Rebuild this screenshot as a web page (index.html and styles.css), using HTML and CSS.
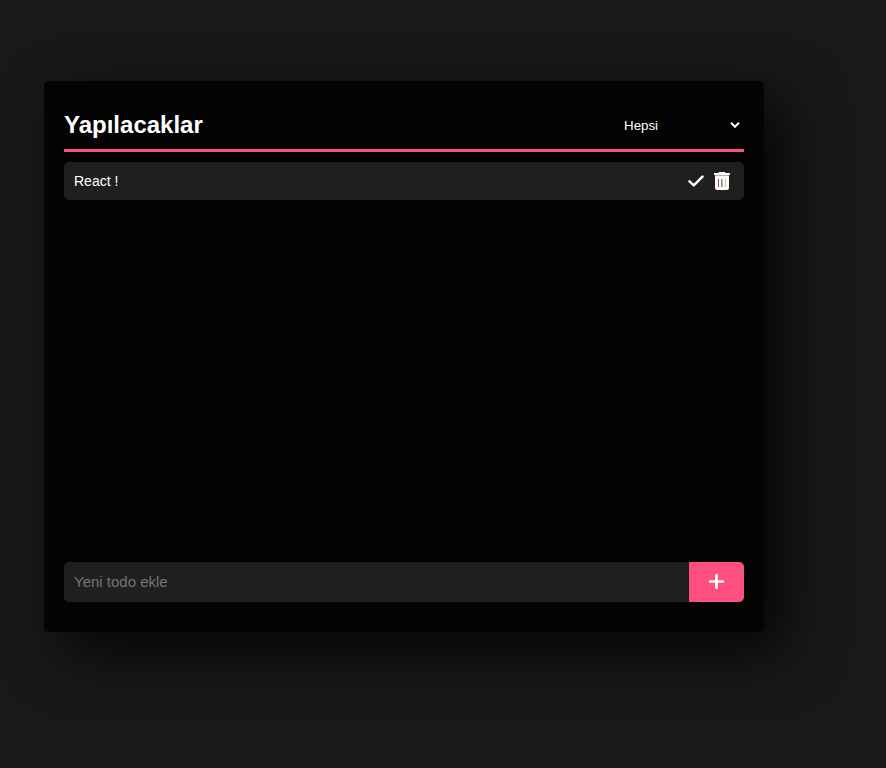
FILE: index.html
```html
<!DOCTYPE html>
<html lang="tr">
<head>
<meta charset="utf-8">
<title>Yapılacaklar</title>
<link rel="stylesheet" href="styles.css">
</head>
<body>
<main class="card">
  <header class="header">
    <h1 class="title">Yapılacaklar</h1>
    <div class="filter"><span>Hepsi</span>
      <svg class="chevron" viewBox="0 0 10 6"><path d="M1 0.8 5 4.8 9 0.8"/></svg>
    </div>
  </header>
  <ul class="list">
    <li class="item">
      <span class="text">React !</span>
      <svg class="check" viewBox="0 0 16 18"><path d="M1.500 9.300 5.800 13.300 14.500 4.700"/></svg>
      <svg class="trash" viewBox="0 0 16 18">
        <path class="fill" d="M0 1h4.500l.6-1h5.800l.6 1H16v2H0zM1 4h14v11.500Q15 18 12.500 18h-9Q1 18 1 15.500z"/>
        <path class="shade" d="M1 3h14v1H1z"/>
        <path class="bar-a" d="M4 7h1v8H4z"/>
        <path class="bar-b" d="M7 7h1v8H7z"/>
        <path class="bar-c" d="M8 7h1v8H8z"/>
        <path class="bar-d" d="M11 7h1v8h-1z"/>
      </svg>
    </li>
  </ul>
  <form class="form">
    <input class="input" placeholder="Yeni todo ekle">
    <button class="add" type="button" aria-label="Ekle"><svg viewBox="0 0 15 15"><path d="M6.200 .8a1.300 .8 0 0 1 2.600 0v5.400h5.400a.8 1.300 0 0 1 0 2.600H8.800v5.400a1.300 .8 0 0 1-2.600 0V8.800H.8a.8 1.300 0 0 1 0-2.600h5.400z"/></svg></button>
  </form>
</main>
</body>
</html>
```
FILE: styles.css
```css
* { box-sizing: border-box; margin: 0; padding: 0; }
html { background: #191919; }
body {
  height: 768px;
  padding: 81px 0 0 44px;
  overflow: hidden;
  font-family: "Liberation Sans", Arial, sans-serif;
  color: #fff;
}
.card {
  display: flex;
  flex-direction: column;
  width: 720px;
  height: 551px;
  padding: 20px 20px 30px;
  background: #040404;
  border-radius: 5px;
  box-shadow: 20px 20px 60px rgba(0, 0, 0, 0.85);
}
.header {
  display: flex;
  align-items: center;
  justify-content: space-between;
  height: 51px;
  border-bottom: 3px solid #ff4f81;
}
.title { font-size: 24px; line-height: 28px; }
.filter {
  display: flex;
  align-items: center;
  justify-content: space-between;
  width: 120px;
  padding-right: 4px;
  font-size: 13.333px;
}
.chevron { width: 10px; height: 6px; fill: none; stroke: #fff; stroke-width: 2; }
.list { flex: 1; padding-top: 10px; list-style: none; }
.item {
  display: flex;
  align-items: center;
  height: 38px;
  padding: 0 14px 0 10px;
  background: #1f1f1f;
  border-radius: 5px;
  font-size: 14px;
}
.text { flex: 1; }
.check {
  width: 16px;
  height: 18px;
  margin-right: 10px;
  fill: none;
  stroke: #fff;
  stroke-width: 2.5;
  stroke-linecap: round;
  stroke-linejoin: round;
}
.trash { width: 16px; height: 18px; }
.fill { fill: #fff; }
.shade { fill: #b5b5b5; }
.bar-a { fill: #a03a9a; }
.bar-b { fill: #6f8fae; }
.bar-c { fill: #e0a880; }
.bar-d { fill: #e8b870; }
.form { display: flex; height: 40px; border-radius: 5px; overflow: hidden; }
.input {
  flex: 1;
  padding: 0 10px 2px;
  border: 0;
  background: #1f1f1f;
  color: #fff;
  font: 15px "Liberation Sans", Arial, sans-serif;
}
.input::placeholder { color: #757575; }
.add {
  display: flex;
  align-items: center;
  justify-content: center;
  width: 55px;
  padding-bottom: 1px;
  border: 0;
  background: #ff4f81;
}
.add svg { width: 15px; height: 15px; fill: #fff; }
```
